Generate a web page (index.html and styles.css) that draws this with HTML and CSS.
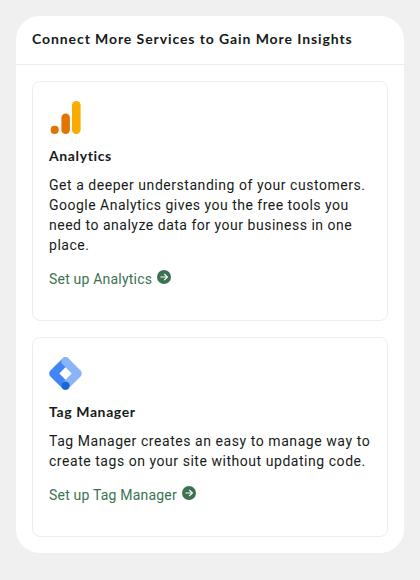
FILE: index.html
```html
<!DOCTYPE html>
<html lang="en">
<head>
<meta charset="utf-8">
<title>Connect More Services</title>
<link rel="stylesheet" href="styles.css">
</head>
<body>
<section class="widget">
  <header class="widget-header"><h3 class="t-head">Connect More Services to Gain More Insights</h3></header>
  <div class="widget-body">
    <article class="service service-analytics">
      <svg class="logo" width="33" height="33" viewBox="0 0 33 33"><rect x="23" y="0" width="8.600" height="33" rx="4.300" fill="#f9ab00"/><rect x="12.400" y="12.400" width="8.500" height="20.600" rx="4.250" fill="#e37400"/><circle cx="5.700" cy="28.900" r="4.100" fill="#e37400"/></svg>
      <h4 class="name t-ana">Analytics</h4>
      <p class="copy"><span class="a1">Get a deeper understanding of your customers.</span><br><span class="a2">Google Analytics gives you the free tools you</span><br><span class="a3">need to analyze data for your business in one</span><br><span class="a4">place.</span></p>
      <a class="cta"><span class="c1">Set up Analytics</span><svg class="arrow" width="14" height="14" viewBox="0 0 14 14"><circle cx="7" cy="7" r="7" fill="#3c7251"/><path d="M3.400 7H10M7.200 3.800L10.400 7L7.200 10.200" fill="none" stroke="#fff" stroke-width="1.200"/></svg></a>
    </article>
    <article class="service service-tag">
      <svg class="logo" width="33" height="33" viewBox="0 0 33 33"><g fill="none" stroke-width="8.400" stroke-linejoin="round" stroke-linecap="round"><path d="M16.500 4.400L4.400 16.500L16.500 28.600" stroke="#4285f4"/><path d="M16.500 4.400L28.600 16.500L16.500 28.600" stroke="#8ab4f8"/></g><circle cx="16.500" cy="28.600" r="4.200" fill="#1967d2"/></svg>
      <h4 class="name t-tag">Tag Manager</h4>
      <p class="copy"><span class="b1">Tag Manager creates an easy to manage way to</span><br><span class="b2">create tags on your site without updating code.</span></p>
      <a class="cta"><span class="c2">Set up Tag Manager</span><svg class="arrow" width="14" height="14" viewBox="0 0 14 14"><circle cx="7" cy="7" r="7" fill="#3c7251"/><path d="M3.400 7H10M7.200 3.800L10.400 7L7.200 10.200" fill="none" stroke="#fff" stroke-width="1.200"/></svg></a>
    </article>
  </div>
</section>
</body>
</html>
```
FILE: styles.css
```css
*{box-sizing:border-box}
body{margin:0;padding:16px;background:#f0f0f0;font-family:Roboto,sans-serif;color:#161b18;font-size:14px;line-height:20px}
h3,h4,p{margin:0}
.widget{height:537px;background:#fff;border-radius:24px}
.widget-header{height:49px;padding:13px 16px 0;border-bottom:1px solid #e9edf0}
h3,h4{font-family:Lato,sans-serif;font-size:14px;line-height:20px;font-weight:700;letter-spacing:.62px}
h3{letter-spacing:.91px}
.widget-body{padding:16px;display:grid;gap:16px}
.service{border:1px solid #ebeef0;border-radius:8px;padding:19px 16px 0}
.service-analytics{height:240px}
.service-tag{height:200px}
.logo{display:block}
.name{margin-top:12px}
.copy{margin-top:9px;white-space:nowrap;letter-spacing:.54px}
.a2{letter-spacing:.49px}
.a3{letter-spacing:.51px}
.b1{letter-spacing:.56px}
.cta{display:flex;align-items:flex-start;gap:5px;margin-top:14px;color:#3c7251;letter-spacing:.2px}
.arrow{margin-top:1px}
```
